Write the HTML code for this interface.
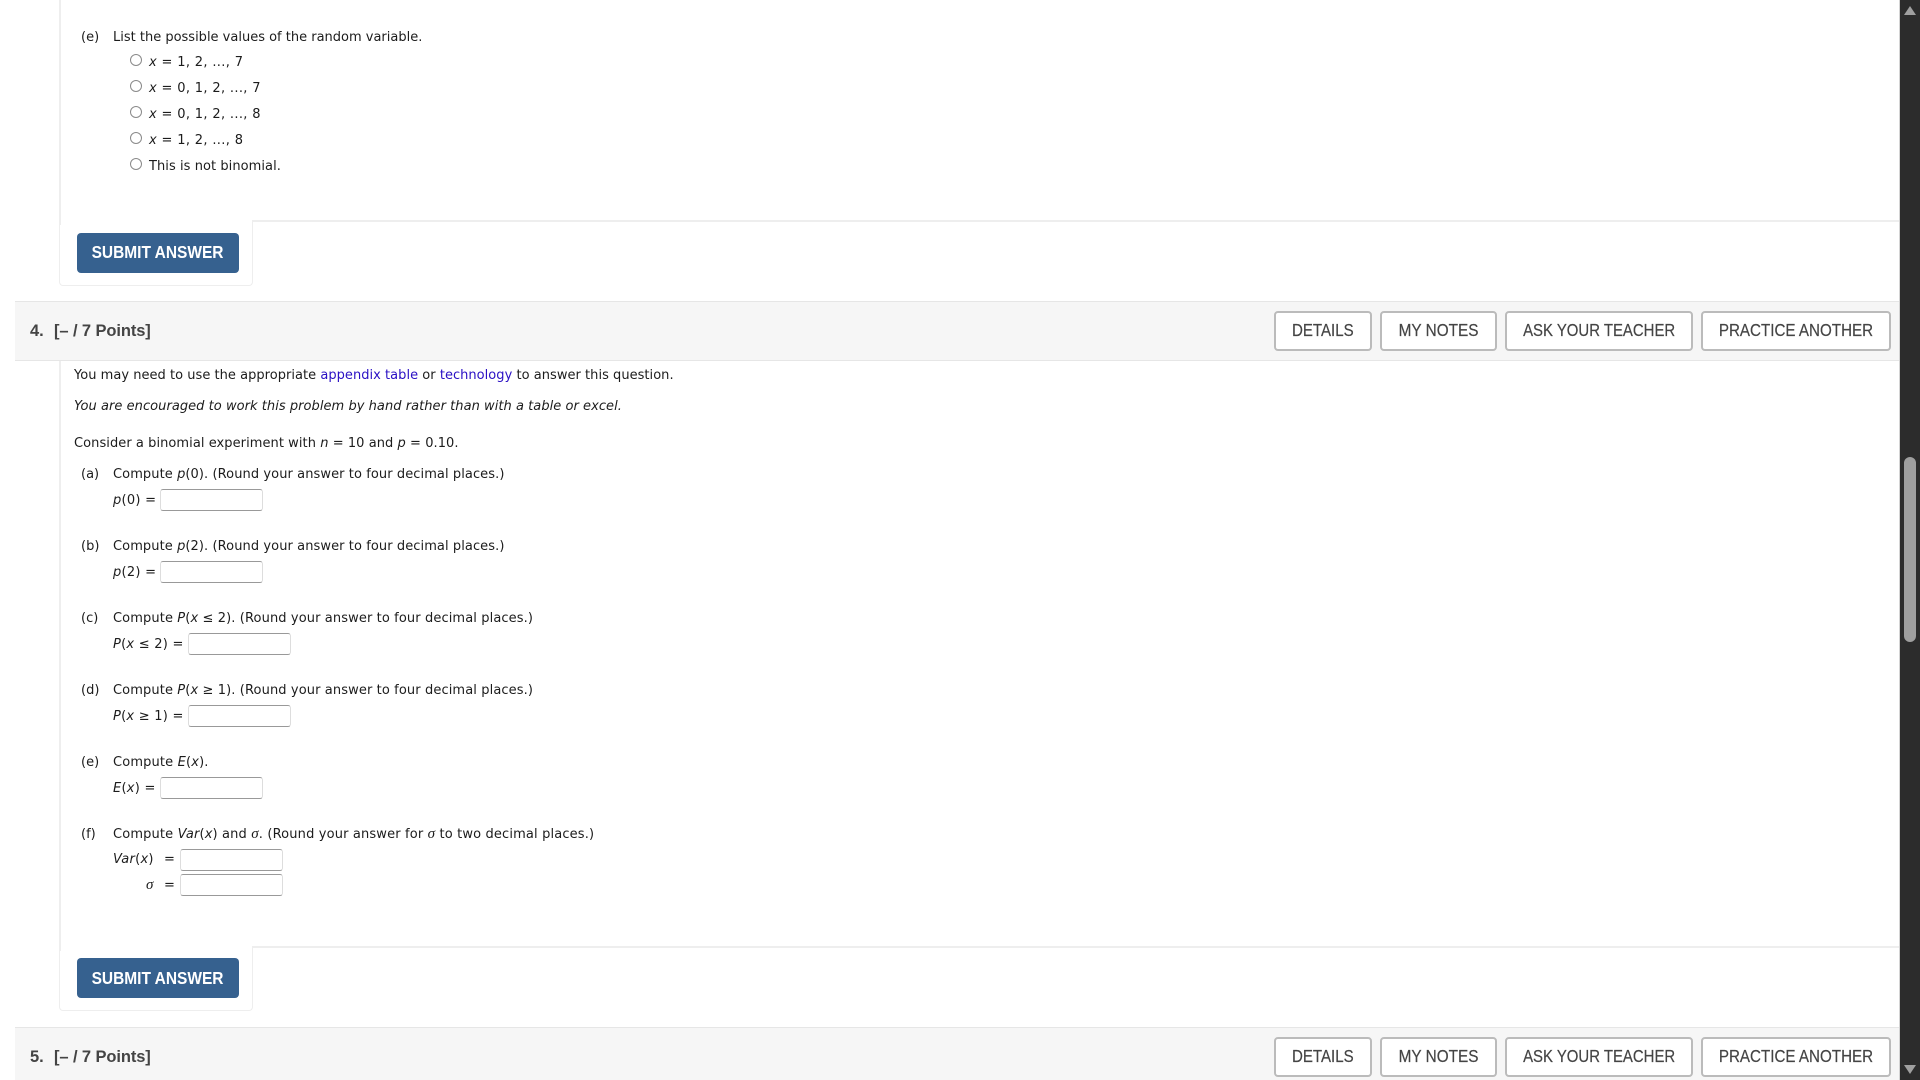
<!DOCTYPE html>
<html><head><meta charset="utf-8"><style>
html,body{margin:0;padding:0;background:#fff;width:1920px;height:1080px;overflow:hidden}
body{position:relative;font-family:"DejaVu Sans","Liberation Sans",sans-serif;font-size:13px;color:#1c1c1c}
.t{position:absolute;white-space:nowrap;line-height:20px;height:20px;margin-top:1px}
.o{letter-spacing:.34px}
.b{position:absolute;background:#eee}
i{font-style:italic}
i.s{font-family:"Liberation Serif",serif;font-size:15px;line-height:0}
a{color:#2a10c4;text-decoration:none}
.r{position:absolute;width:10px;height:10px;border:1.5px solid #8a8a8a;border-radius:50%;background:#fff;left:129.5px}
.in{position:absolute;box-sizing:border-box;height:22px;border:1px solid;border-color:#999 #ddd #999 #ddd;border-radius:3px;background:#fff}
.sb{position:absolute;left:77px;width:162px;height:40px;background:#36618f;border-radius:4px;color:#fff;font:bold 17.5px/38px "Liberation Sans",sans-serif;text-align:center}
.sb span,.btn span{display:inline-block;white-space:nowrap}
.sb span{transform:scaleX(.885)}
.h{position:absolute;left:15px;width:1885px;height:58px;background:#f6f6f6;border-top:1px solid #e6e6e6;border-bottom:1px solid #e6e6e6}
.pt{position:absolute;font:bold 16.5px/20px "Liberation Sans",sans-serif;color:#444;white-space:nowrap}
.btn{position:absolute;box-sizing:border-box;height:40px;border:2px solid #bbb;border-radius:4px;background:#fff;color:#444;font:17.5px/35px "Liberation Sans",sans-serif;text-align:center;white-space:nowrap;-webkit-text-stroke:.2px #444}
.c{position:absolute;box-sizing:border-box;left:59px;width:194px;height:65px;border:1.5px solid #eee;border-top:0;border-radius:0 0 4px 4px}
</style></head><body>
<div class="b" style="left:59px;top:0;width:1.5px;height:225px"></div>
<div class="c" style="top:221px"></div>
<div class="b" style="left:251.5px;top:220px;width:1647.5px;height:1.5px"></div>

<div class="t" style="left:81px;top:27px">(e)</div>
<div class="t" style="left:113px;top:27px">List the possible values of the random variable.</div>
<div class="r" style="top:54px"></div><div class="t o" style="left:149px;top:52px"><i>x</i> = 1, 2, ..., 7</div>
<div class="r" style="top:80px"></div><div class="t o" style="left:149px;top:78px"><i>x</i> = 0, 1, 2, ..., 7</div>
<div class="r" style="top:106px"></div><div class="t o" style="left:149px;top:104px"><i>x</i> = 0, 1, 2, ..., 8</div>
<div class="r" style="top:132px"></div><div class="t o" style="left:149px;top:130px"><i>x</i> = 1, 2, ..., 8</div>
<div class="r" style="top:158px"></div><div class="t" style="left:149px;top:156px;letter-spacing:.06px">This is not binomial.</div>
<div class="sb" style="top:233px"><span>SUBMIT ANSWER</span></div>

<div class="h" style="top:301px"></div>
<div class="pt" style="left:30px;top:321px">4.</div>
<div class="pt" style="left:54px;top:321px;letter-spacing:-.1px">[– / 7 Points]</div>
<div class="btn" style="left:1274px;top:311px;width:98px"><span style="transform:scaleX(.86)">DETAILS</span></div>
<div class="btn" style="left:1380px;top:311px;width:117px"><span style="transform:scaleX(.877)">MY NOTES</span></div>
<div class="btn" style="left:1505px;top:311px;width:188px"><span style="transform:scaleX(.853)">ASK YOUR TEACHER</span></div>
<div class="btn" style="left:1701px;top:311px;width:190px"><span style="transform:scaleX(.867)">PRACTICE ANOTHER</span></div>

<div class="b" style="left:59px;top:361px;width:1.5px;height:590px"></div>
<div class="c" style="top:946px"></div>
<div class="b" style="left:251.5px;top:946px;width:1647.5px;height:1.5px"></div>

<div class="t" style="left:74px;top:365px;letter-spacing:.03px">You may need to use the appropriate <a>appendix table</a> or <a>technology</a> to answer this question.</div>
<div class="t" style="left:74px;top:396px;letter-spacing:.045px"><i>You are encouraged to work this problem by hand rather than with a table or excel.</i></div>
<div class="t" style="left:74px;top:433px;letter-spacing:.06px">Consider a binomial experiment with <i>n</i> = 10 and <i>p</i> = 0.10.</div>

<div class="t" style="left:81px;top:464px">(a)</div>
<div class="t" style="left:113px;top:464px;letter-spacing:.08px">Compute <i>p</i>(0). (Round your answer to four decimal places.)</div>
<div class="t" style="left:113px;top:490px;letter-spacing:.25px"><i>p</i>(0) =</div>
<div class="in" style="left:160px;top:489px;width:103px"></div>

<div class="t" style="left:81px;top:536px">(b)</div>
<div class="t" style="left:113px;top:536px;letter-spacing:.08px">Compute <i>p</i>(2). (Round your answer to four decimal places.)</div>
<div class="t" style="left:113px;top:562px;letter-spacing:.25px"><i>p</i>(2) =</div>
<div class="in" style="left:160px;top:561px;width:103px"></div>

<div class="t" style="left:81px;top:608px">(c)</div>
<div class="t" style="left:113px;top:608px;letter-spacing:.11px">Compute <i>P</i>(<i>x</i> ≤ 2). (Round your answer to four decimal places.)</div>
<div class="t" style="left:113px;top:634px;letter-spacing:.25px"><i>P</i>(<i>x</i> ≤ 2) =</div>
<div class="in" style="left:188px;top:633px;width:103px"></div>

<div class="t" style="left:81px;top:680px">(d)</div>
<div class="t" style="left:113px;top:680px;letter-spacing:.11px">Compute <i>P</i>(<i>x</i> ≥ 1). (Round your answer to four decimal places.)</div>
<div class="t" style="left:113px;top:706px;letter-spacing:.25px"><i>P</i>(<i>x</i> ≥ 1) =</div>
<div class="in" style="left:188px;top:705px;width:103px"></div>

<div class="t" style="left:81px;top:752px">(e)</div>
<div class="t" style="left:113px;top:752px;letter-spacing:.15px">Compute <i>E</i>(<i>x</i>).</div>
<div class="t" style="left:113px;top:778px;letter-spacing:.25px"><i>E</i>(<i>x</i>) =</div>
<div class="in" style="left:160px;top:777px;width:103px"></div>

<div class="t" style="left:81px;top:824px">(f)</div>
<div class="t" style="left:113px;top:824px;letter-spacing:.15px">Compute <i>Var</i>(<i>x</i>) and <i class="s">σ</i>. (Round your answer for <i class="s">σ</i> to two decimal places.)</div>
<div class="t" style="left:113px;top:849px;letter-spacing:.25px"><i>Var</i>(<i>x</i>)</div>
<div class="t" style="left:164px;top:849px">=</div>
<div class="in" style="left:180px;top:849px;width:103px"></div>
<div class="t" style="left:146px;top:875px"><i class="s">σ</i></div>
<div class="t" style="left:164px;top:875px">=</div>
<div class="in" style="left:180px;top:874px;width:103px"></div>
<div class="sb" style="top:958px;line-height:40px"><span>SUBMIT ANSWER</span></div>

<div class="h" style="top:1027px"></div>
<div class="pt" style="left:30px;top:1047px">5.</div>
<div class="pt" style="left:54px;top:1047px;letter-spacing:-.1px">[– / 7 Points]</div>
<div class="btn" style="left:1274px;top:1037px;width:98px"><span style="transform:scaleX(.86)">DETAILS</span></div>
<div class="btn" style="left:1380px;top:1037px;width:117px"><span style="transform:scaleX(.877)">MY NOTES</span></div>
<div class="btn" style="left:1505px;top:1037px;width:188px"><span style="transform:scaleX(.853)">ASK YOUR TEACHER</span></div>
<div class="btn" style="left:1701px;top:1037px;width:190px"><span style="transform:scaleX(.867)">PRACTICE ANOTHER</span></div>

<div style="position:absolute;left:1899px;top:0;width:1px;height:1080px;background:#d4d4d4"></div>
<div style="position:absolute;left:1900px;top:0;width:20px;height:1080px;background:#2c2c2c"></div>
<svg style="position:absolute;left:1900px;top:0" width="20" height="1080"><path d="M4 15L10 6L16 15Z" fill="#a0a0a0"/><path d="M4 1065L16 1065L10 1074Z" fill="#a0a0a0"/></svg>
<div style="position:absolute;left:1904px;top:457px;width:12px;height:185px;background:#9f9f9f;border-radius:6px"></div>
</body></html>
